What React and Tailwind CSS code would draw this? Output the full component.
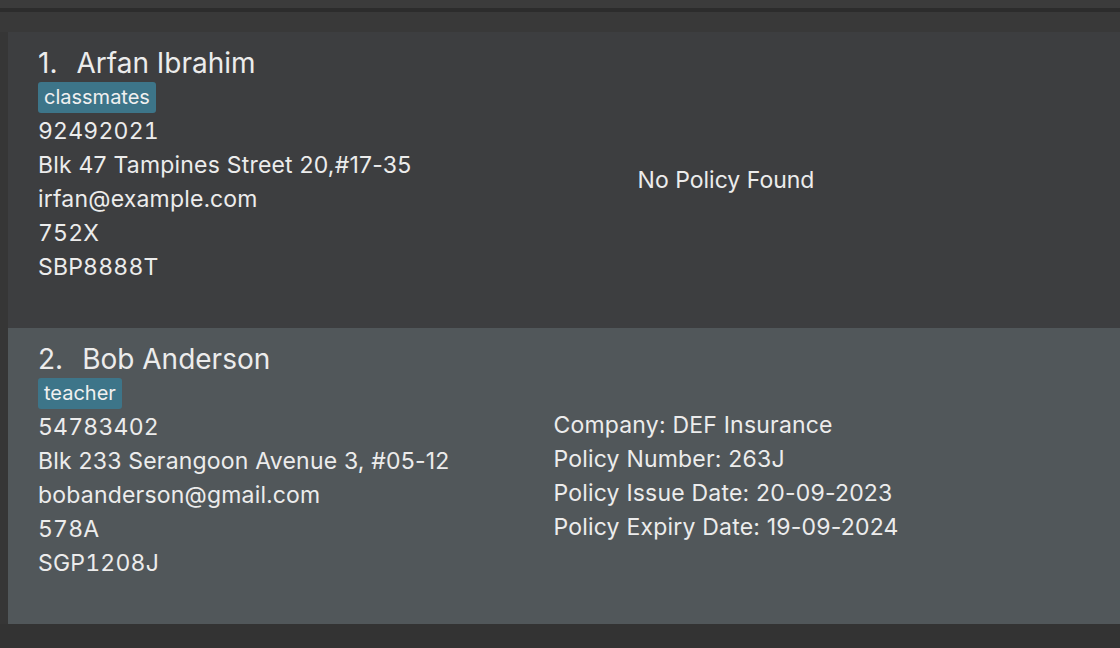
export default function App() {
  const people = [
    {
      idx: 1,
      name: "Arfan Ibrahim",
      tag: "classmates",
      lines: ["92492021", "Blk 47 Tampines Street 20,#17-35", "irfan@example.com", "752X", "SBP8888T"],
      policy: null,
      bg: "bg-[#3d3e40]",
    },
    {
      idx: 2,
      name: "Bob Anderson",
      tag: "teacher",
      lines: ["54783402", "Blk 233 Serangoon Avenue 3, #05-12", "bobanderson@gmail.com", "578A", "SGP1208J"],
      policy: [
        "Company: DEF Insurance",
        "Policy Number: 263J",
        "Policy Issue Date: 20-09-2023",
        "Policy Expiry Date: 19-09-2024",
      ],
      bg: "bg-[#51575a]",
    },
  ];
  return (
    <div
      className="w-[1120px] h-[648px] bg-[#333333] flex flex-col overflow-hidden text-[#ececec]"
      style={{ fontFamily: "Inter, 'Noto Sans', sans-serif" }}
    >
      <div className="h-[8px] bg-[#3b3b3b]" />
      <div className="h-[4px] bg-[#2c2c2c]" />
      <div className="h-[20px] bg-[#393939]" />
      <div className="flex flex-col pl-[8px] bg-[#363636]">
        {people.map((p) => (
          <PersonCard key={p.idx} p={p} />
        ))}
      </div>
      <div className="flex-1 bg-[#333333]" />
    </div>
  );
}

function PersonCard({ p }) {
  return (
    <div className={`h-[296px] flex ${p.bg}`}>
      <div className="w-[532px] pl-[30px] pt-[13px] flex flex-col items-start">
        <div className="h-[36px] text-[28px] leading-[36px] flex">
          <span className="mr-[19px]">{p.idx}.</span>
          <span>{p.name}</span>
        </div>
        <div className="mt-[1px] h-[31px] px-[6px] rounded-[3px] bg-[#3d7589] text-[20px] leading-[31px] text-[#f0f0f0]">
          {p.tag}
        </div>
        <div className="mt-[1px] flex flex-col">
          {p.lines.map((l) => (
            <div
              key={l}
              className={
                l.includes("-")
                  ? "h-[34px] text-[23px] leading-[34px] tracking-[0.2px]"
                  : "h-[34px] text-[23px] leading-[34px] tracking-[0.2px] tabular-nums"
              }
            >
              {l}
            </div>
          ))}
        </div>
      </div>
      <div className="w-[372px] flex items-center justify-center">
        {p.policy ? (
          <div className="flex flex-col">
            {p.policy.map((l) => (
              <div key={l} className="h-[34px] text-[23px] leading-[34px] tracking-[0.2px]">
                {l}
              </div>
            ))}
          </div>
        ) : (
          <div className="text-[23px] leading-[34px]">No Policy Found</div>
        )}
      </div>
    </div>
  );
}
